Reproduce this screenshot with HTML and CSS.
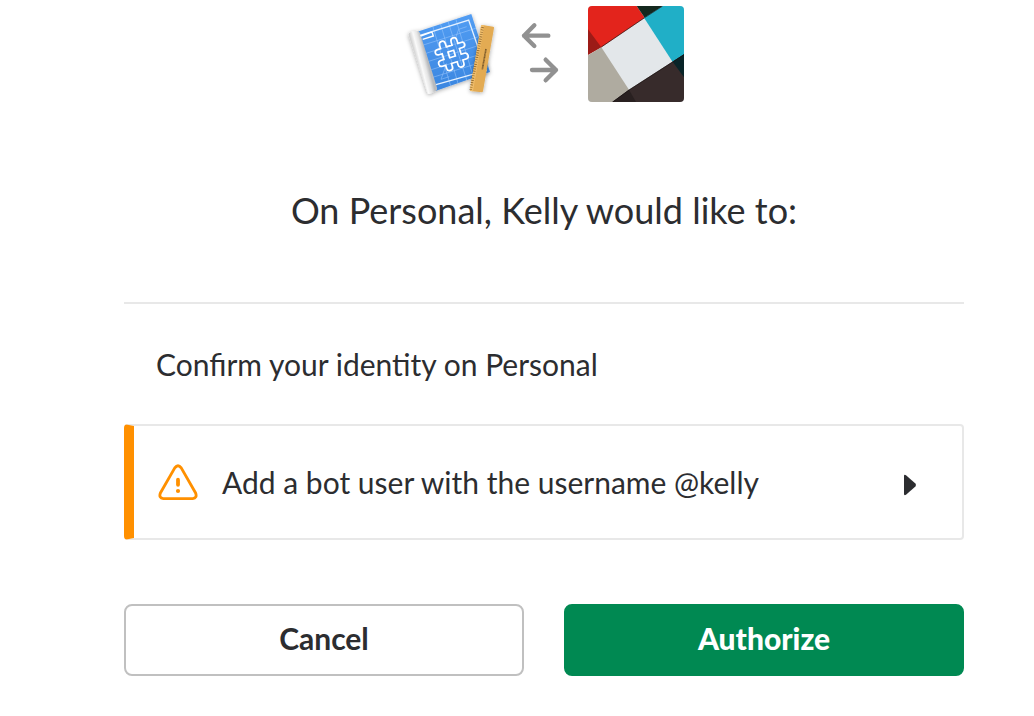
FILE: index.html
```html
<!DOCTYPE html>
<html lang="en">
<head>
<meta charset="utf-8">
<meta name="viewport" content="width=device-width, initial-scale=1">
<title>Authorize Kelly</title>
<link rel="stylesheet" href="styles.css">
</head>
<body>
<main class="auth">
  <div class="link-icons">
    <svg class="app-icon" viewBox="12 18 288 288" role="img" aria-label="Kelly app">
      <defs>
        <linearGradient id="paper" x1="0" y1="0" x2="0" y2="1">
          <stop offset="0" stop-color="#529df3"/><stop offset="1" stop-color="#3a86e0"/>
        </linearGradient>
        <linearGradient id="roll" gradientUnits="userSpaceOnUse" x1="52" y1="194" x2="83" y2="186">
          <stop offset="0" stop-color="#d2d2d2"/><stop offset=".35" stop-color="#fafafa"/><stop offset=".7" stop-color="#e4e4e4"/><stop offset="1" stop-color="#b8babd"/>
        </linearGradient>
        <filter id="shade" x="-20%" y="-20%" width="140%" height="140%">
          <feDropShadow dx="0" dy="3" stdDeviation="6" flood-color="#000" flood-opacity=".35"/>
        </filter>
        <clipPath id="sheet"><path d="M54 94 214 42 270 216 108 272Z"/></clipPath>
      </defs>
      <g filter="url(#shade)">
        <path d="M52 95 214 42 270 216 106 273Z" fill="url(#paper)"/>
        <path d="M26 106Q24 98 34 96L50 92Q57 92 60 99L111 263Q113 271 105 274L90 281Q84 284 81 276Z" fill="url(#roll)"/>
      </g>
      <g clip-path="url(#sheet)" fill="none" stroke="#a9d0ff" stroke-width="2" opacity=".7">
        <path d="M98 78 152 258M121 70 174 250M144 64 200 240M167 56 220 230M70 135 230 84M78 160 236 110M86 184 244 134M94 209 250 160M98 232 250 185M166 116 176 88 200 80M140 190 123 238 148 230"/>
      </g>
      <path d="M60 106 206 60 258 212 108 254" fill="none" stroke="#e5f1ff" stroke-width="4"/>
      <path d="M62 108 92 97Q96 96 97 99L100 108 68 118" fill="none" stroke="#fff" stroke-width="4"/>
      <g transform="translate(155 162) rotate(-17)">
        <path d="M-27-25V-35Q-27-45-18-45T-9-35V-25H9V-35Q9-45 18-45T27-35V-25H37Q46-25 46-17T37-9H27V9H37Q46 9 46 18T37 27H27V37Q27 46 18 46T9 37V27H-9V37Q-9 46-18 46T-27 37V27H-37Q-46 27-46 18T-37 9H-27V-9H-37Q-46-9-46-17T-37-25Z" fill="none" stroke="#fff" stroke-width="5"/>
        <rect x="-9" y="-9" width="18" height="18" fill="none" stroke="#fff" stroke-width="5"/>
      </g>
      <g filter="url(#shade)">
        <path d="M247 75 280 80Q283 81 282 84L249 274Q248 277 245 277L212 273Q209 272 210 269L243 78Q244 75 247 75Z" fill="#e3ab53"/>
      </g>
      <path d="M247 75 253 76 219 274 212 273Q209 272 210 269L243 78Q244 75 247 75Z" fill="#efbd6b"/>
      <path d="M248 82 212 269" fill="none" stroke="#875d24" stroke-width="8" stroke-dasharray="2 5"/>
      <path d="M258 147 247 208" fill="none" stroke="#7a592a" stroke-width="5" stroke-dasharray="4 1 2 1"/>
    </svg>
    <svg class="swap-icon" viewBox="30 -12 144 288" aria-hidden="true">
      <path d="M115 77H42M73 46 42 77 73 108M66 180H138M107 149 138 180 107 211" fill="none" stroke="#919191" stroke-width="13" stroke-linecap="round" stroke-linejoin="round"/>
    </svg>
    <svg class="team-icon" viewBox="24 18 288 288" role="img" aria-label="Personal workspace">
      <path d="M24 18H312V306H24Z" fill="#e3e7ea"/>
      <path d="M24 18H170L194 53 64 142 24 164Z" fill="#e3241c"/>
      <path d="M24 88 64 142 24 164Z" fill="#9c1b17"/>
      <path d="M170 18H248L194 53Z" fill="#14281e"/>
      <path d="M248 18H312V165L278 186 192 53Z" fill="#20afc7"/>
      <path d="M24 166 64 142 147 269 96 306H24Z" fill="#afaba0"/>
      <path d="M96 306 147 269 312 163V306Z" fill="#372b2b"/>
      <path d="M98 306 147 269 168 306Z" fill="#292020"/>
      <path d="M278 185 312 163V232Z" fill="#082428"/>
      <path d="M64 141 194 53 248 18M98 306 147 270 312 164" fill="none" stroke="#18100f" stroke-width="2"/>
    </svg>
  </div>

  <h1 class="title">On Personal, Kelly would like to:</h1>

  <section class="scopes">
    <p class="scope">Confirm your identity on Personal</p>
    <button class="scope-card" type="button" aria-expanded="false">
      <svg class="warning-icon" viewBox="0 0 42 38" aria-hidden="true">
        <path d="M17.6 4.1Q21 -.5 24.4 4.1L39.6 30.6Q41.5 36 36.5 36.5H5.5Q.5 36 2.4 30.6Z" fill="none" stroke="#ff9000" stroke-width="3" stroke-linejoin="round"/>
        <path d="M21 16.5V22" stroke="#ff9000" stroke-width="4" stroke-linecap="round"/>
        <circle cx="21" cy="28.5" r="2.2" fill="#ff9000"/>
      </svg>
      <span class="scope-text">Add a bot user with the username @kelly</span>
      <svg class="caret-icon" viewBox="1 -6 14 28" aria-hidden="true">
        <path d="M1 2Q1 .2 3 1.2L12.4 9.6Q13.6 11 12.4 12.4L3 20.8Q1 21.8 1 20Z" fill="#2c2d30"/>
      </svg>
    </button>
  </section>

  <div class="actions">
    <button class="btn btn-outline" type="button">Cancel</button>
    <button class="btn btn-primary" type="submit">Authorize</button>
  </div>
</main>
</body>
</html>
```
FILE: styles.css
```css
* {
  box-sizing: border-box;
}

body {
  margin: 0;
  background: #fff;
  color: #2c2d30;
  font-family: Lato, "Open Sans", sans-serif;
  font-size: 30px;
  line-height: 44px;
}

.auth {
  padding: 6px 70px 40px 124px;
}

.link-icons {
  display: flex;
  justify-content: center;
  gap: 20px;
}

.app-icon,
.team-icon {
  width: 96px;
  height: 96px;
}

.team-icon {
  border-radius: 4px;
}

.swap-icon {
  width: 48px;
  height: 96px;
}

.title {
  margin: 84px 0 68px;
  font-size: 36px;
  font-weight: 400;
  line-height: 48px;
  text-align: center;
}

.scopes {
  border-top: 2px solid #e8e8e8;
}

.scope {
  margin: 0;
  padding: 38px 32px;
}

.scope-card {
  display: flex;
  align-items: center;
  width: 100%;
  padding: 34px 44px 34px 24px;
  border: 2px solid #e8e8e8;
  border-left: 10px solid #ff9000;
  border-radius: 4px;
  background: #fff;
  color: inherit;
  font: inherit;
  text-align: left;
}

.warning-icon {
  flex: none;
  width: 40px;
  height: 36px;
  margin-right: 24px;
}

.scope-text {
  flex: 1;
}

.caret-icon {
  flex: none;
  width: 14px;
  height: 28px;
}

.actions {
  display: grid;
  grid-template-columns: 1fr 1fr;
  gap: 40px;
  margin-top: 64px;
}

.btn {
  padding: 10px 24px 14px;
  border: 2px solid #c0c0c0;
  border-radius: 8px;
  background: #fff;
  color: inherit;
  font: inherit;
  font-weight: 700;
}

.btn-primary {
  border-color: #008952;
  background: #008952;
  color: #fff;
  font-weight: 900;
}
```
